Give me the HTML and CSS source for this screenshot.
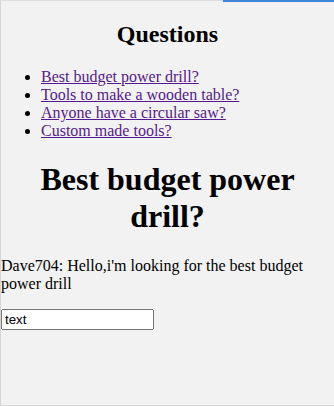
FILE: index.html
```html
<!DOCTYPE html>
<html lang="en">
<head>
  <meta charset="UTF-8">
  <meta name="viewport" content="width=device-width, initial-scale=1.0">
  <title>Questions</title>
  <link rel="stylesheet" href="styles.css">
</head>
<body>
  <div class="page">
    <div class="loading-bar"></div>

    <h2 class="title">Questions</h2>
    <ul class="question-list">
      <li><a href="#">Best budget power drill?</a></li>
      <li><a href="#">Tools to make a wooden table?</a></li>
      <li><a href="#">Anyone have a circular saw?</a></li>
      <li><a href="#">Custom made tools?</a></li>
    </ul>

    <h1 class="title">Best budget power drill?</h1>
    <p>Dave704: Hello,i'm looking for the best budget power drill</p>
    <input type="text" value="text">
  </div>
</body>
</html>
```

FILE: styles.css
```css
html, body {
  margin: 0;
  padding: 0;
  background-color: #f2f2f2;
}

.page {
  position: relative;
  box-sizing: border-box;
  min-height: 406px;
  font-family: "Liberation Serif", "Times New Roman", serif;
  font-size: 16px;
  color: #000;
  background-color: #f2f2f2;
  border-top: 1px solid #dcdcdc;
  border-left: 1px solid #d6d6d6;
  border-bottom: 1px solid #d6d6d6;
}

/* blue strip across the top right */
.loading-bar {
  position: absolute;
  top: -1px;
  left: 222px;
  right: 0;
  height: 2px;
  background-color: #3f86d8;
}

.title {
  text-align: center;
}

.question-list a {
  color: #551a8b;
}

input {
  box-sizing: border-box;
  width: 153px;
  height: 21px;
  font-family: "Liberation Sans", Arial, sans-serif;
  font-size: 13.33px;
}
```
